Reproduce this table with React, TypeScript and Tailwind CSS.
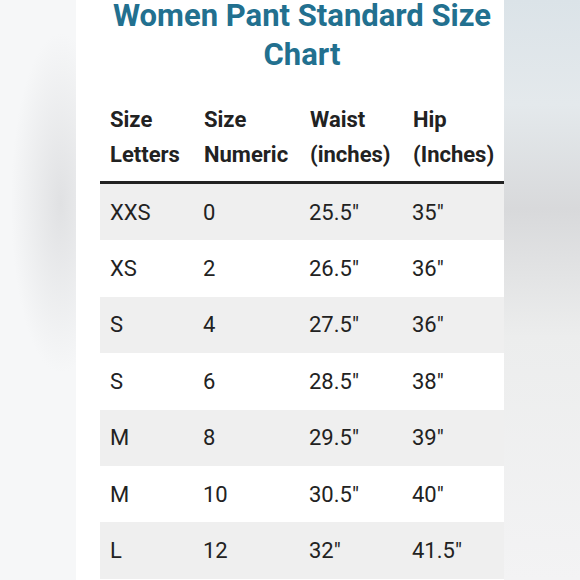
const rows = [
  ["XXS", "0", '25.5"', '35"'],
  ["XS", "2", '26.5"', '36"'],
  ["S", "4", '27.5"', '36"'],
  ["S", "6", '28.5"', '38"'],
  ["M", "8", '29.5"', '39"'],
  ["M", "10", '30.5"', '40"'],
  ["L", "12", '32"', '41.5"'],
];

const cols = "grid grid-cols-[93px_106px_103px_103px]";

export default function App() {
  return (
    <div className="flex w-[580px] h-[580px] overflow-hidden font-['Roboto',sans-serif]">
      {/* blurred photo edge, left */}
      <div className="flex-1 bg-[radial-gradient(ellipse_50px_170px_at_80%_35%,#e0e1e3,#f6f7f8)]" />

      <div className="w-[428px] bg-white pl-[24px]">
        <h1 className="-mt-[4px] text-center text-[31px] leading-[39px] font-bold text-[#22708f]">
          Women Pant Standard Size
          <br />
          Chart
        </h1>

        <div className="mt-[28px] text-[22px] text-[#222]">
          <div className={`${cols} font-bold leading-[35px] pb-[9px] border-b-[3px] border-[#222]`}>
            <div className="pl-[10px]">Size<br />Letters</div>
            <div className="pl-[11px]">Size<br />Numeric</div>
            <div className="pl-[11px]">Waist<br />(inches)</div>
            <div className="pl-[11px]">Hip<br />(Inches)</div>
          </div>

          {rows.map((r, i) => (
            <div
              key={i}
              className={`${cols} h-[56.4px] items-center ${i % 2 === 0 ? "bg-[#efefef]" : "bg-white"}`}
            >
              {r.map((c, j) => (
                <div key={j} className="pl-[10px]">{c}</div>
              ))}
            </div>
          ))}
        </div>
      </div>

      {/* blurred photo edge, right */}
      <div className="flex-1 bg-[linear-gradient(to_bottom,#dbe3e8,#e4e9ec_18%,#d8d9db_36%,#eceded_58%,#f3f3f4)]" />
    </div>
  );
}
